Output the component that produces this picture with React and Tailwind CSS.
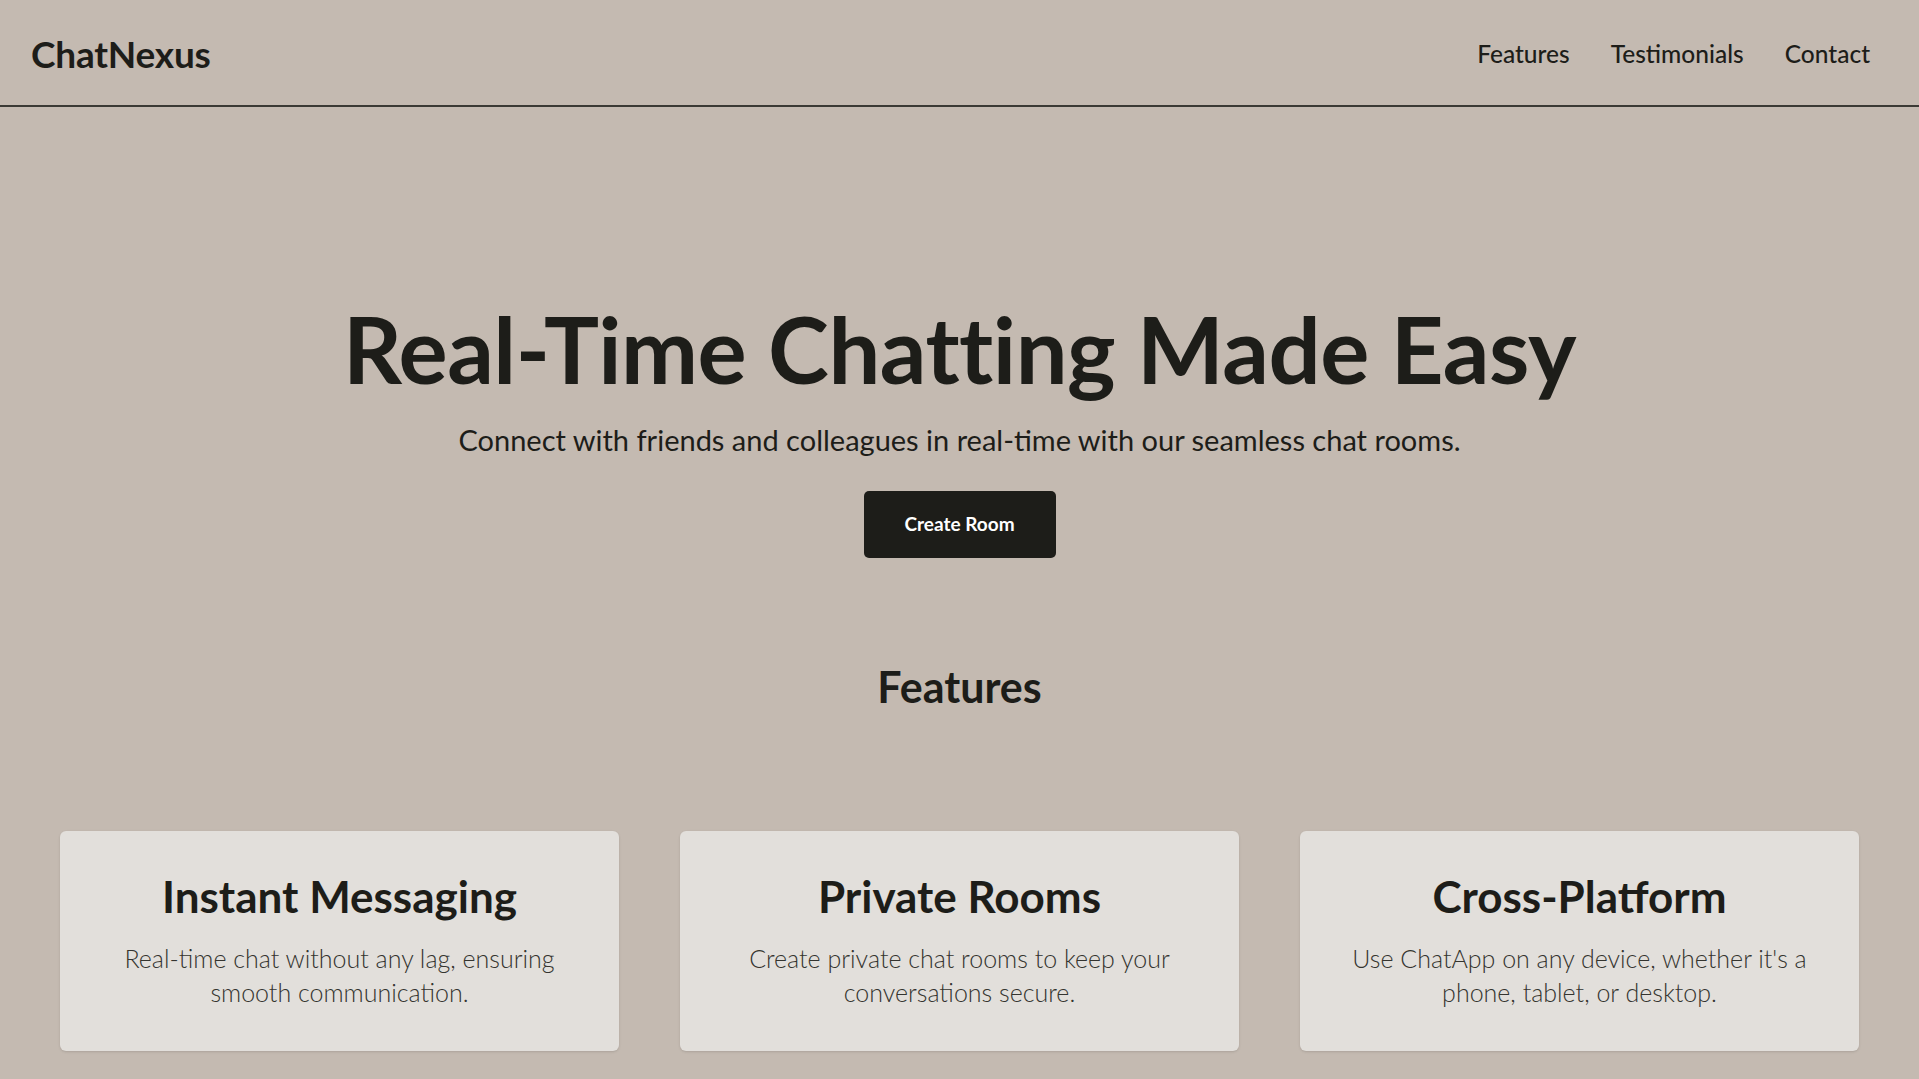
export default function App() {
  const features = [
    { title: 'Instant Messaging', text: 'Real-time chat without any lag, ensuring smooth communication.' },
    { title: 'Private Rooms', text: 'Create private chat rooms to keep your conversations secure.' },
    { title: 'Cross-Platform', text: "Use ChatApp on any device, whether it's a phone, tablet, or desktop." },
  ]

  return (
    <div
      className="min-h-screen bg-[#c4bab1] text-[#1d1d19]"
      style={{ fontFamily: 'Lato, "Open Sans", sans-serif' }}
    >
      {/* Cabecera */}
      <header className="flex h-[107px] items-center justify-between border-b-2 border-[#3b3a35] pl-[31px] pr-[49px]">
        <div className="mt-[2px] text-[37px] font-bold tracking-[-0.2px]">ChatNexus</div>
        <nav className="mt-[3px] flex gap-[41px] text-[24.5px] font-medium">
          <a href="#features">Features</a>
          <a href="#testimonials">Testimonials</a>
          <a href="#contact">Contact</a>
        </nav>
      </header>

      {/* Hero */}
      <section className="flex flex-col items-center pt-[196px] text-center">
        <h1 className="text-[92px] font-bold leading-none tracking-[-0.5px]">Real-Time Chatting Made Easy</h1>
        <p className="mt-[30px] text-[29px] leading-none">
          Connect with friends and colleagues in real-time with our seamless chat rooms.
        </p>
        <button className="mt-[37px] h-[67px] w-[192px] rounded-[5px] bg-[#1d1d19] text-[19px] font-bold text-white">
          Create Room
        </button>
      </section>

      {/* Features */}
      <section id="features" className="pt-[107px]">
        <h2 className="text-center text-[43px] font-bold leading-none">Features</h2>
        <div className="mt-[123px] grid grid-cols-3 gap-[61px] px-[60px]">
          {features.map((f) => (
            <div key={f.title} className="flex h-[220px] flex-col items-center rounded-[6px] bg-[#e2dfdb] px-8 pt-[43px] text-center shadow-sm">
              <h3 className="text-[44px] font-bold leading-none">{f.title}</h3>
              <p className="mt-[23px] max-w-[470px] text-[25px] font-light leading-[34px] text-[#34342f]">{f.text}</p>
            </div>
          ))}
        </div>
      </section>
    </div>
  )
}
